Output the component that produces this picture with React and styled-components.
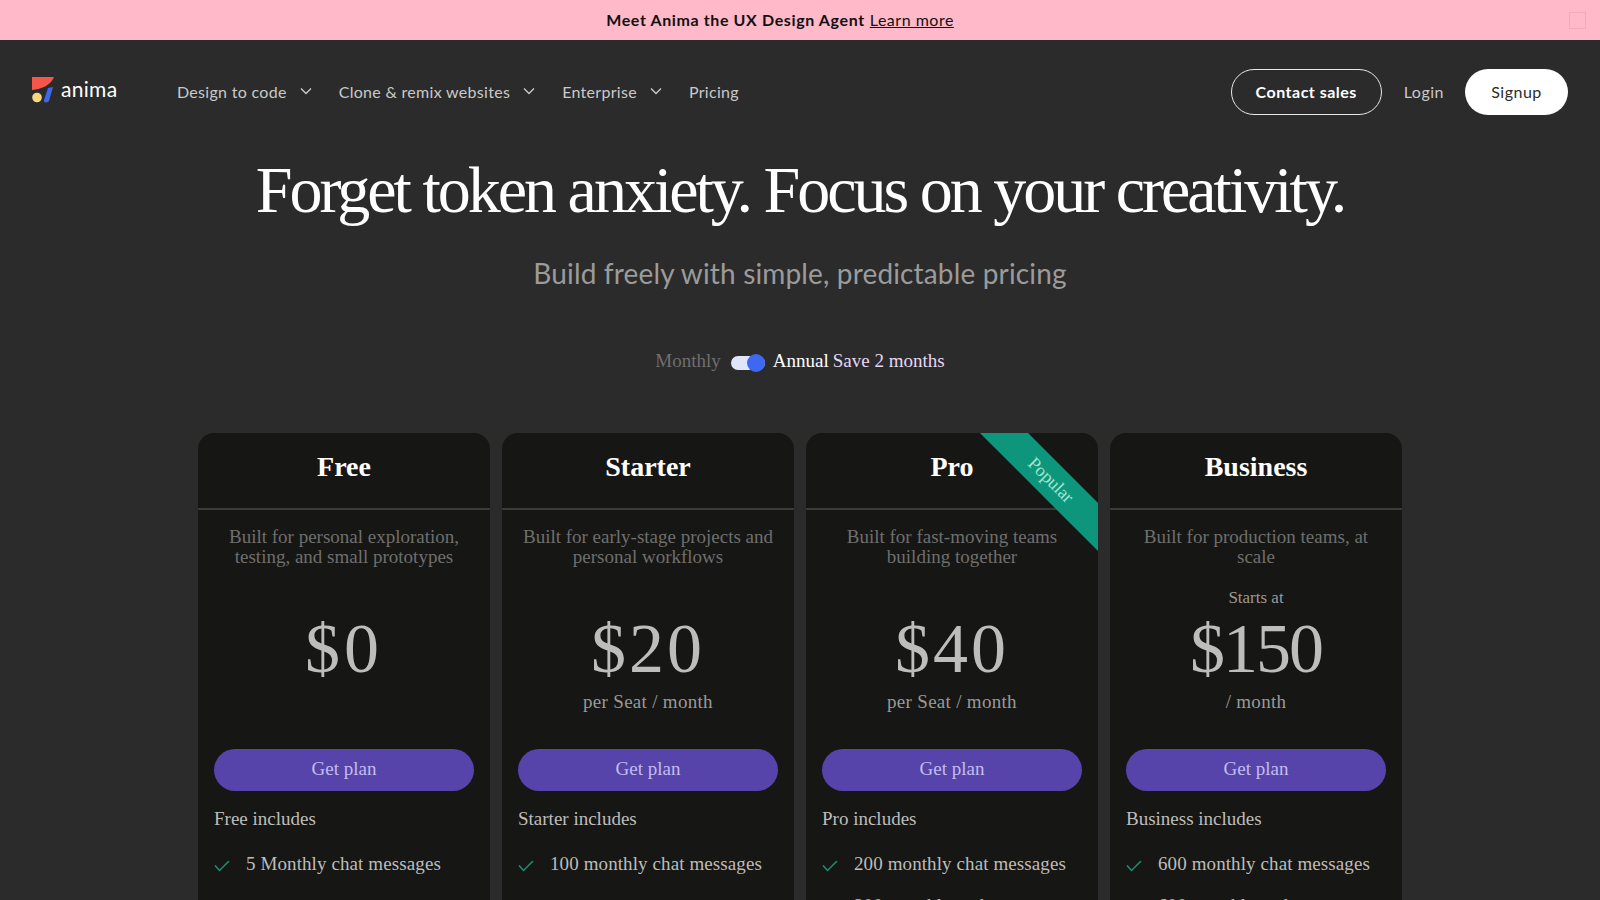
import React from 'react';
import styled, { createGlobalStyle } from 'styled-components';

const GlobalStyle = createGlobalStyle`
  html, body {
    margin: 0;
    height: 900px;
    overflow: hidden;
    background: #2b2b2b;
  }
`;

const SANS = `Lato, "Open Sans", sans-serif`;
const SERIF = `"Liberation Serif", serif`;

const Banner = styled.div`
  position: relative;
  height: 40px;
  box-sizing: border-box;
  padding: 0 40px 1px 0;
  background: #ffb9c9;
  display: flex;
  align-items: center;
  justify-content: center;
  gap: 5px;
  font-family: ${SANS};
  font-size: 16px;
  color: #111;
`;

const BannerTitle = styled.span`
  font-weight: 700;
  letter-spacing: 0.62px;
`;

const BannerLink = styled.a`
  text-decoration: underline;
  letter-spacing: 0.5px;
`;

const BannerClose = styled.div`
  position: absolute;
  right: 14px;
  top: 12px;
  width: 15px;
  height: 15px;
  border: 1px solid #efadbc;
`;

const Navbar = styled.nav`
  height: 104px;
  display: flex;
  align-items: center;
  justify-content: space-between;
  padding: 0 32px;
  font-family: ${SANS};
  font-size: 16px;
  letter-spacing: 0.3px;
  color: #c9c9c9;
`;

const LeftGroup = styled.div`
  display: flex;
  align-items: center;
`;

const Brand = styled.div`
  display: flex;
  align-items: center;
  gap: 6px;
  width: 145px;
  color: #fff;
  font-size: 21px;
  margin-top: -4px;
`;

const BrandName = styled.span`
  margin-top: -4px;
`;

const NavItem = styled.div`
  display: flex;
  align-items: center;
  gap: 12px;
  margin-right: 26px;
  padding-bottom: 2px;
`;

const RightGroup = styled.div`
  display: flex;
  align-items: center;
  letter-spacing: 0.5px;
`;

const ContactButton = styled.div`
  width: 151px;
  height: 46px;
  box-sizing: border-box;
  padding-bottom: 2px;
  border: 1px solid #e8e8e8;
  border-radius: 23px;
  display: flex;
  align-items: center;
  justify-content: center;
  color: #fff;
  font-weight: 700;
`;

const LoginLink = styled.div`
  margin: 0 21px 2px 22px;
`;

const SignupButton = styled.div`
  width: 103px;
  height: 46px;
  box-sizing: border-box;
  padding-bottom: 2px;
  border-radius: 23px;
  background: #fff;
  color: #2b2b2b;
  display: flex;
  align-items: center;
  justify-content: center;
`;

const Headline = styled.h1`
  margin: 8px 0 0;
  text-align: center;
  font-family: ${SERIF};
  font-weight: 400;
  font-size: 66px;
  line-height: 76px;
  letter-spacing: -3px;
  color: #fff;
`;

const Subtitle = styled.p`
  margin: 27px 0 0;
  text-align: center;
  font-family: ${SANS};
  font-size: 28px;
  line-height: 36px;
  letter-spacing: 0.15px;
  color: #9b9b9b;
`;

const BillingRow = styled.div`
  margin-top: 50px;
  height: 40px;
  display: flex;
  align-items: center;
  justify-content: center;
  font-family: ${SERIF};
  font-size: 19px;
`;

const BillingLabel = styled.span`
  color: ${({ $active }) => ($active ? '#fff' : '#6f6f6f')};
`;

const SaveLabel = styled.span`
  color: #e9d6f2;
  margin-left: 4px;
`;

const Toggle = styled.div`
  position: relative;
  width: 34px;
  height: 14px;
  margin: 4px 8px 0 10px;
  border-radius: 7px;
  background: #dfe5fb;
`;

const ToggleKnob = styled.div`
  position: absolute;
  right: 0;
  top: -2px;
  width: 18px;
  height: 18px;
  border-radius: 50%;
  background: #3f68f0;
`;

const Plans = styled.div`
  margin: 52px auto 0;
  width: 1204px;
  display: grid;
  grid-template-columns: repeat(4, 292px);
  gap: 12px;
`;

const Card = styled.div`
  position: relative;
  overflow: hidden;
  height: 520px;
  border-radius: 16px 16px 0 0;
  background: #161614;
  font-family: ${SERIF};
`;

const CardTitle = styled.div`
  height: 77px;
  box-sizing: border-box;
  padding-top: 16px;
  border-bottom: 2px solid #3a3a38;
  text-align: center;
  font-size: 28px;
  line-height: 36px;
  font-weight: 700;
  color: #fff;
`;

const Ribbon = styled.div`
  position: absolute;
  top: 30px;
  right: -53px;
  width: 200px;
  height: 34px;
  transform: rotate(45deg);
  background: #0e967d;
  color: #a0e6d3;
  font-size: 18px;
  line-height: 34px;
  text-align: center;
`;

const CardBody = styled.div`
  padding: 17px 16px 0;
`;

const Description = styled.div`
  height: 40px;
  text-align: center;
  font-size: 19px;
  line-height: 20px;
  color: #6f6f6d;
`;

const StartsAt = styled.div`
  height: 20px;
  margin-top: 21px;
  text-align: center;
  font-size: 17px;
  line-height: 20px;
  color: #9a9a98;
`;

const Price = styled.div`
  margin-top: 5px;
  text-align: center;
  font-size: 70px;
  line-height: 72px;
  letter-spacing: ${({ $tracking }) => $tracking}px;
  color: #bdbdbb;
`;

const PriceUnit = styled.div`
  height: 24px;
  margin-top: 5px;
  text-align: center;
  font-size: 19px;
  line-height: 24px;
  letter-spacing: 0.3px;
  color: #9a9a98;
`;

const PlanButton = styled.div`
  margin-top: 35px;
  height: 42px;
  border-radius: 21px;
  background: #5644aa;
  color: #c3bcf2;
  font-size: 19px;
  line-height: 40px;
  text-align: center;
`;

const IncludesLabel = styled.div`
  margin-top: 16px;
  font-size: 19px;
  line-height: 24px;
  color: #bdbdbb;
`;

const FeatureList = styled.div`
  margin-top: 21px;
  display: flex;
  flex-direction: column;
  gap: 18px;
`;

const Feature = styled.div`
  display: flex;
  align-items: center;
  gap: 16px;
  font-size: 19px;
  line-height: 24px;
  letter-spacing: 0.1px;
  color: #bdbdbb;
`;

const CheckIcon = styled.svg`
  flex: none;
  margin-top: 3px;
`;

const Chevron = () => (
  <svg width="14" height="14" viewBox="0 0 14 14" fill="none" stroke="#c9c9c9" strokeWidth="1.4">
    <path d="M2 4.5 7 9.5 12 4.5" />
  </svg>
);

const Check = () => (
  <CheckIcon width="16" height="12" viewBox="0 0 16 12" fill="none" stroke="#1a9077" strokeWidth="1.5">
    <path d="M1 5.5 5.5 10.5 15 1" />
  </CheckIcon>
);

const Logo = () => (
  <svg width="23" height="26" viewBox="0 0 23 26">
    <path d="M0 0H22C19 8 10 12 0 13Z" fill="#f4574a" />
    <circle cx="5" cy="20.5" r="4.8" fill="#f9d77e" />
    <path d="M16 11 21 10 17 24C16 26 11 26 12 23Z" fill="#3e68ec" />
  </svg>
);

const plans = [
  { name: 'Free', description: 'Built for personal exploration, testing, and small prototypes', price: '$0', tracking: 4, features: ['5 Monthly chat messages'] },
  { name: 'Starter', description: 'Built for early-stage projects and personal workflows', price: '$20', tracking: 3, unit: 'per Seat / month', features: ['100 monthly chat messages'] },
  { name: 'Pro', description: 'Built for fast-moving teams building together', price: '$40', tracking: 3, unit: 'per Seat / month', features: ['200 monthly chat messages', '200 monthly code'], popular: true },
  { name: 'Business', description: 'Built for production teams, at scale', startsAt: true, price: '$150', tracking: -2, unit: '/ month', features: ['600 monthly chat messages', '600 monthly code'] },
];

export default function App() {
  return (
    <>
      <GlobalStyle />
      <Banner>
        <BannerTitle>Meet Anima the UX Design Agent</BannerTitle>
        <BannerLink>Learn more</BannerLink>
        <BannerClose />
      </Banner>
      <Navbar>
        <LeftGroup>
          <Brand><Logo /><BrandName>anima</BrandName></Brand>
          <NavItem>Design to code <Chevron /></NavItem>
          <NavItem>Clone &amp; remix websites <Chevron /></NavItem>
          <NavItem>Enterprise <Chevron /></NavItem>
          <NavItem>Pricing</NavItem>
        </LeftGroup>
        <RightGroup>
          <ContactButton>Contact sales</ContactButton>
          <LoginLink>Login</LoginLink>
          <SignupButton>Signup</SignupButton>
        </RightGroup>
      </Navbar>
      <Headline>Forget token anxiety. Focus on your creativity.</Headline>
      <Subtitle>Build freely with simple, predictable pricing</Subtitle>
      <BillingRow>
        <BillingLabel>Monthly</BillingLabel>
        <Toggle><ToggleKnob /></Toggle>
        <BillingLabel $active>Annual</BillingLabel>
        <SaveLabel>Save 2 months</SaveLabel>
      </BillingRow>
      <Plans>
        {plans.map((plan) => (
          <Card key={plan.name}>
            <CardTitle>{plan.name}</CardTitle>
            {plan.popular && <Ribbon>Popular</Ribbon>}
            <CardBody>
              <Description>{plan.description}</Description>
              <StartsAt>{plan.startsAt && 'Starts at'}</StartsAt>
              <Price $tracking={plan.tracking}>{plan.price}</Price>
              <PriceUnit>{plan.unit}</PriceUnit>
              <PlanButton>Get plan</PlanButton>
              <IncludesLabel>{plan.name} includes</IncludesLabel>
              <FeatureList>
                {plan.features.map((feature) => (
                  <Feature key={feature}><Check />{feature}</Feature>
                ))}
              </FeatureList>
            </CardBody>
          </Card>
        ))}
      </Plans>
    </>
  );
}
